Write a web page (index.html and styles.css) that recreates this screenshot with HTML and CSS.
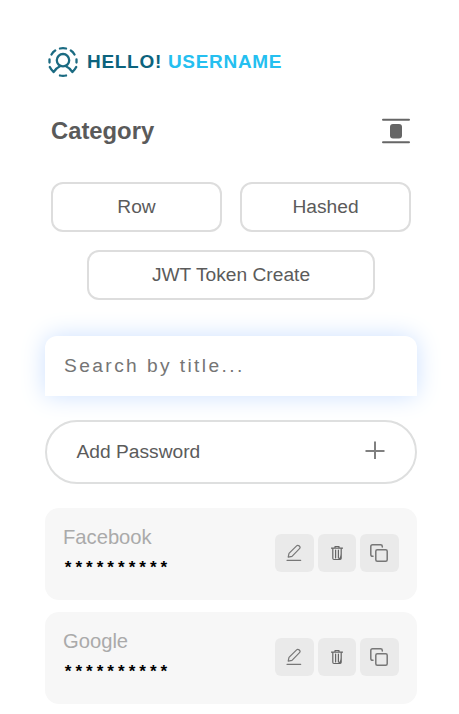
FILE: index.html
```html
<!DOCTYPE html>
<html lang="en">
<head>
<meta charset="utf-8">
<title>Passwords</title>
<link rel="stylesheet" href="styles.css">
</head>
<body>
<svg class="symbols" aria-hidden="true">
  <symbol id="pen" viewBox="0 0 16 18"><path d="M2.200 13.200 3 9.400 10.600 1.800c.8-.8 1.800-.6 2.700.2.9.9 1 1.900.2 2.700L6 12.300 2.200 13.200ZM1 16.300h13.700"/></symbol>
  <symbol id="trash" viewBox="0 0 12 16"><path d="M.3 3.200h11.400M4 3V1.500h4V3M1.800 3.500v9.800q0 1.200 1.200 1.200h6q1.200 0 1.200-1.200V3.500M4.600 5v8M7.400 5v8"/><path class="shade" d="M10 9v5.300H6.500q3-1.300 3.500-5.300Z"/></symbol>
  <symbol id="copy" viewBox="0 0 20 20"><rect x="6.800" y="6.800" width="11.400" height="11.400" rx="1.500"/><path d="M4 13.300H3.500Q1.800 13.300 1.800 11.600V3.500Q1.800 1.800 3.500 1.800H11.600Q13.300 1.800 13.300 3.500V4"/></symbol>
</svg>
<main class="page">
  <header class="greeting">
    <svg class="avatar" viewBox="0 0 30 30">
      <circle cx="15" cy="13.200" r="6.200"/>
      <path d="M1.800 20Q3.300 23 5.700 25Q8 21 12 19.200M18 19.200Q22 21 24.300 25Q26.700 23 28.200 20M12 1.500Q15 .8 18 1.500M12 28.500Q15 29.200 18 28.500M3.500 7.500Q5 4.800 7.200 3.500M22.800 3.500Q25 4.800 26.500 7.500M1.500 12.500V15.500M28.500 12.500V15.500"/>
    </svg>
    <h1 class="hello">HELLO! <span class="username">USERNAME</span></h1>
  </header>
  <div class="section-head">
    <h2 class="section-title">Category</h2>
    <svg class="layout-icon" viewBox="0 0 28 26"><path d="M1 1.800h26M1 24.200h26"/><rect x="8" y="6" width="12" height="14.500" rx="3"/></svg>
  </div>
  <div class="categories">
    <button class="category">Row</button>
    <button class="category">Hashed</button>
    <button class="category wide">JWT Token Create</button>
  </div>
  <input class="search" type="text" placeholder="Search by title...">
  <button class="add">Add Password
    <svg class="plus" viewBox="0 0 20 20"><path d="M.5 10h19M10 .5v17.500"/></svg>
  </button>
  <section class="entries">
    <article class="entry">
      <div class="details"><div class="title">Facebook</div><div class="secret">**********</div></div>
      <div class="actions">
        <button class="action" aria-label="Edit"><svg class="pen"><use href="#pen"/></svg></button>
        <button class="action" aria-label="Delete"><svg class="trash"><use href="#trash"/></svg></button>
        <button class="action" aria-label="Copy"><svg class="copy"><use href="#copy"/></svg></button>
      </div>
    </article>
    <article class="entry">
      <div class="details"><div class="title">Google</div><div class="secret">**********</div></div>
      <div class="actions">
        <button class="action" aria-label="Edit"><svg class="pen"><use href="#pen"/></svg></button>
        <button class="action" aria-label="Delete"><svg class="trash"><use href="#trash"/></svg></button>
        <button class="action" aria-label="Copy"><svg class="copy"><use href="#copy"/></svg></button>
      </div>
    </article>
  </section>
</main>
</body>
</html>
```
FILE: styles.css
```css
* { box-sizing: border-box; }
body { margin: 0; background: #fff; font-family: "Liberation Sans", Arial, sans-serif; color: #5b5b5b; }
h1, h2 { margin: 0; }
button { padding: 0; font: inherit; color: inherit; }
svg { display: block; fill: none; stroke: currentColor; stroke-linecap: round; stroke-linejoin: round; }
.symbols { display: none; }
.page { width: 459px; height: 714px; padding: 46px 42px 10px 45px; overflow: hidden; }
.greeting { display: flex; align-items: center; height: 32px; padding-left: 3px; }
.avatar { width: 30px; height: 30px; color: #1b6b82; stroke-width: 2.300; }
.hello { margin-left: 9px; font-size: 19px; line-height: 30px; letter-spacing: .7px; color: #0c637d; white-space: nowrap; }
.username { color: #25bff0; }
.section-head { display: flex; justify-content: space-between; align-items: center; height: 30px; margin-top: 38px; padding: 0 7px 0 6px; }
.section-title { font-size: 23.800px; line-height: 30px; color: #5a5a5a; }
.layout-icon { width: 28px; height: 26px; color: #666; stroke-width: 2; }
.layout-icon rect { fill: currentColor; stroke: none; }
.categories { display: grid; grid-template-columns: 171px 171px; gap: 18px; padding: 0 6px; margin-top: 36px; }
.category { height: 50px; border: 2px solid #ddd; border-radius: 12px; background: #fff; font-size: 19.200px; }
.wide { grid-column: 1 / 3; width: 288px; margin-left: 36px; }
.search { display: block; width: 372px; height: 60px; margin-top: 36px; padding: 0 19px; border: 0; border-radius: 12px 12px 0 0; background: #fff; box-shadow: 0 0 25px #cce0ff; font: 19.200px "Liberation Sans", Arial, sans-serif; letter-spacing: 2.400px; }
.search::placeholder { color: #757575; }
.add { display: flex; align-items: center; justify-content: space-between; width: 372px; height: 64px; margin-top: 24px; padding: 0 30px 1px 29.500px; border: 2px solid #dedfdf; border-radius: 32px; background: #fff; font-size: 19.200px; }
.plus { width: 20px; height: 20px; margin-bottom: 1px; stroke: #808080; stroke-width: 2; stroke-linecap: butt; }
.entries { display: grid; gap: 12px; margin-top: 24px; }
.entry { display: flex; justify-content: space-between; align-items: center; height: 92px; padding: 0 18px 2px; border-radius: 14px; background: #f7f7f7; }
.title { margin-top: -1px; font-size: 20.200px; line-height: 24px; color: #aaa; }
.secret { margin-top: 8px; font-family: "Liberation Mono", monospace; font-size: 17px; font-weight: bold; line-height: 24px; letter-spacing: .450px; color: #000; }
.actions { display: flex; gap: 4px; }
.action { display: grid; place-items: center; width: 38.700px; height: 38px; border: 0; border-radius: 6px; background: #eaeaea; color: #777; }
.pen { width: 16px; height: 18px; stroke-width: 1.200; }
.trash { width: 12px; height: 16px; stroke-width: 1.200; color: #666; }
.shade { fill: currentColor; stroke: none; }
.copy { width: 20px; height: 20px; margin-right: 1px; stroke-width: 1.500; }
```
